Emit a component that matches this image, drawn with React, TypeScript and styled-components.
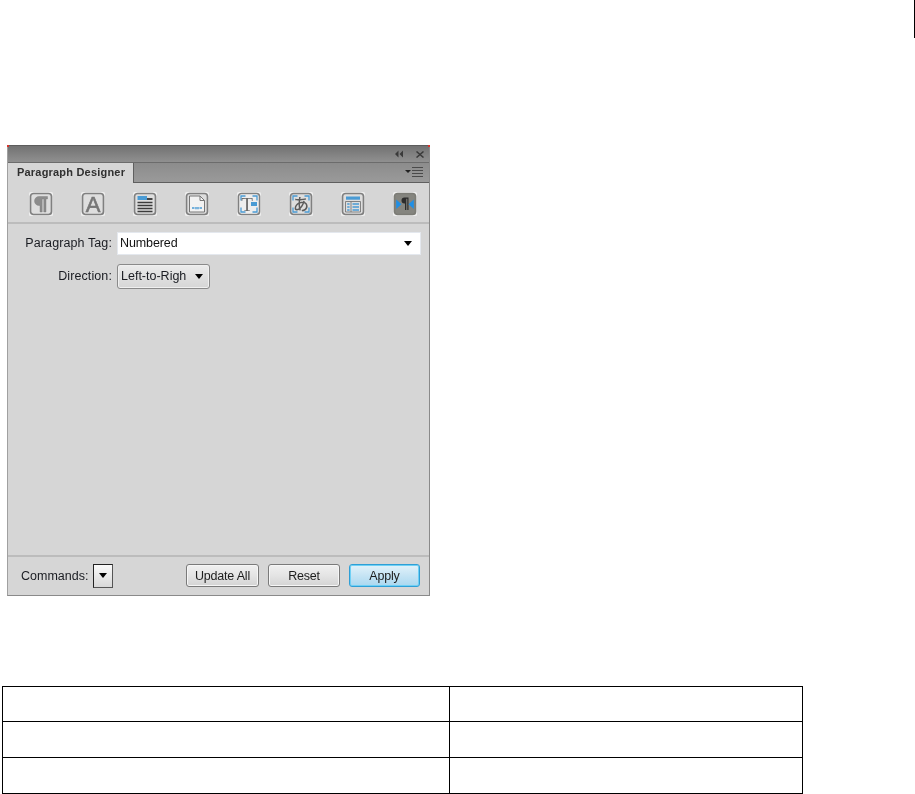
import React from "react";
import styled, { createGlobalStyle, css } from "styled-components";

const Global = createGlobalStyle`
  html, body { margin: 0; padding: 0; background: #fff; }
`;

const Page = styled.div`
  width: 915px;
  height: 794px;
  overflow: hidden;
  display: flex;
  flex-direction: column;
  background: #fff;
  font-family: "Liberation Sans", Arial, sans-serif;
`;

const PageRule = styled.div`
  width: 1px;
  height: 38px;
  margin-left: 914px;
  background: #000;
  flex: none;
`;

const Panel = styled.section`
  position: relative;
  flex: none;
  box-sizing: border-box;
  width: 423px;
  height: 451px;
  margin: 107px 0 0 7px;
  display: flex;
  flex-direction: column;
  background: #d6d6d6;
  border-top: 1px solid #5c5c5c;
  border-right: 1px solid #8a8a8a;
  border-bottom: 1px solid #8a8a8a;
  border-left: 1px solid #a0a0a0;
  filter: blur(0.45px);
  color: #1a1c22;
  font-size: 12px;
`;

const Corner = styled.i<{ $side: "left" | "right" }>`
  position: absolute;
  top: -1px;
  ${(p) => p.$side}: -1px;
  width: 2px;
  height: 2px;
  background: #d8342c;
`;

const TitleBar = styled.div`
  height: 16px;
  flex: none;
  display: flex;
  align-items: center;
  justify-content: flex-end;
  gap: 12px;
  padding-right: 5px;
  background: linear-gradient(#727272, #909090);
  border-bottom: 1px solid #6c6c6c;
`;

const TabStrip = styled.div`
  height: 19px;
  flex: none;
  display: flex;
  justify-content: space-between;
  background: linear-gradient(#8c8c8c, #9a9a9a);
  border-bottom: 1px solid #5f5f5f;
`;

const Tab = styled.div`
  box-sizing: border-box;
  width: 126px;
  height: 20px;
  padding: 3px 0 0 9px;
  background: #d6d6d6;
  border-right: 1px solid #5f5f5f;
  font-size: 11px;
  font-weight: bold;
  letter-spacing: 0.2px;
  color: #303030;
  white-space: nowrap;
`;

const MenuIcon = styled.svg`
  width: 20px;
  height: 12px;
  margin: 3px 5px 0 0;
`;

const IconBar = styled.div`
  height: 41px;
  flex: none;
  box-sizing: border-box;
  display: flex;
  justify-content: space-between;
  align-items: center;
  padding: 3px 12px 0 21px;
  border-bottom: 2px solid #bcbcbc;
`;

const IconTile = styled.svg`
  width: 24px;
  height: 24px;
  flex: none;
  overflow: visible;
`;

const Form = styled.div`
  flex: 1;
  display: flex;
  flex-direction: column;
  gap: 9px;
  padding: 8px 8px 0 0;
`;

const FieldRow = styled.div`
  display: flex;
  align-items: center;
  gap: 5px;
`;

const FieldLabel = styled.span`
  width: 104px;
  flex: none;
  text-align: right;
  font-size: 12.5px;
  letter-spacing: 0.1px;
  white-space: nowrap;
  padding-bottom: 1px;
`;

const TagInput = styled.div`
  flex: 1;
  box-sizing: border-box;
  height: 23px;
  padding: 0 8px 1px 2px;
  display: flex;
  align-items: center;
  justify-content: space-between;
  background: #fff;
  border: 1px solid #e4e8ee;
  font-size: 12.5px;
  letter-spacing: -0.1px;
  color: #111;
`;

const Caret = styled.span`
  width: 0;
  height: 0;
  flex: none;
  border-left: 4.5px solid transparent;
  border-right: 4.5px solid transparent;
  border-top: 5px solid #000;
`;

const DirectionSelect = styled.div`
  box-sizing: border-box;
  width: 93px;
  height: 25px;
  padding: 0 6px 1px 3px;
  display: flex;
  align-items: center;
  justify-content: space-between;
  border: 1px solid #8a8a8a;
  border-radius: 3px;
  background: linear-gradient(#ececec, #e0e0e0 50%, #d6d6d6);
  box-shadow: inset 0 0 0 1px #f0f0f0;
  font-size: 12.5px;
  letter-spacing: 0;
  white-space: nowrap;
`;

const Footer = styled.div`
  height: 40px;
  flex: none;
  box-sizing: border-box;
  display: flex;
  align-items: center;
  padding: 0 9px 1px 13px;
  border-top: 2px solid #bcbcbc;
`;

const CommandsLabel = styled.span`
  font-size: 12.5px;
  width: 72px;
  flex: none;
  white-space: nowrap;
`;

const CommandsButton = styled.div`
  box-sizing: border-box;
  width: 20px;
  height: 24px;
  margin-right: auto;
  display: flex;
  align-items: center;
  justify-content: center;
  border: 1px solid #222;
  border-right-color: #555;
  border-bottom-color: #555;
  background: linear-gradient(#fafafa, #d8d8d8);
`;

const ActionButton = styled.div<{ $primary?: boolean; $width: number }>`
  box-sizing: border-box;
  width: ${(p) => p.$width}px;
  height: 23px;
  margin-left: 9px;
  display: flex;
  align-items: center;
  justify-content: center;
  border: 1px solid #7a7a7a;
  border-radius: 3px;
  font-size: 12.5px;
  letter-spacing: -0.2px;
  color: #1c1c1c;
  background: linear-gradient(#f0f0f0, #e4e4e4 50%, #d4d4d4);
  box-shadow: inset 0 0 0 1px #f6f6f6;
  ${(p) =>
    p.$primary &&
    css`
      border-color: #2f9fd6;
      background: linear-gradient(#e2f2fa, #c6e4f4 50%, #aad8f0);
      box-shadow: inset 0 0 0 1px #6fd0f5;
    `}
`;

const Grid = styled.table`
  flex: none;
  margin: 90px 0 0 2px;
  width: 801px;
  height: 108px;
  border-collapse: collapse;
  table-layout: fixed;
`;

const Cell = styled.td<{ $wide?: boolean }>`
  border: 1px solid #000;
  padding: 0;
  ${(p) => p.$wide && "width: 446px;"}
`;

const Row = styled.tr<{ $h: number }>`
  height: ${(p) => p.$h}px;
`;

const FONT = '"Liberation Sans", Arial, sans-serif';
const BLUE = "#4a9bd4";

const Frame: React.FC<{ children?: React.ReactNode; active?: boolean }> = ({ children, active }) => (
  <IconTile viewBox="0 0 24 24">
    <rect x="0" y="0" width="24" height="24" rx="1.5" fill="#eeeeee" />
    <rect
      x="1.5"
      y="1.5"
      width="21"
      height="21"
      rx="3"
      fill={active ? "#85857f" : "#dedede"}
      stroke={active ? "#7c7c76" : "#808080"}
      strokeWidth="1.7"
    />
    {children}
  </IconTile>
);

const Brackets = () => (
  <path
    d="M4 8.5V4h4.5M15.5 4H20v4.5M4 15.5V20h4.5M15.5 20H20v-4.5"
    fill="none"
    stroke={BLUE}
    strokeWidth="1.3"
  />
);

const Icons = [
  <Frame key="p">
    <path d="M18.5 4.5H10a4.5 4.5 0 0 0 0 9h1V20h2.2V7h1.6v13H17V7h1.5z" fill="#8c8c8c" stroke="#7a7a7a" strokeWidth="0.4" />
  </Frame>,
  <Frame key="a">
    <text x="12" y="20" textAnchor="middle" fontFamily={FONT} fontSize="22" stroke="#777" strokeWidth="0.6" fill="#777">A</text>
  </Frame>,
  <Frame key="l">
    <rect x="4.5" y="4" width="9.5" height="4" fill={BLUE} />
    <rect x="14" y="6" width="5.5" height="2" fill="#444" />
    <path d="M4.5 10.5h15M4.5 13.5h15M4.5 16.5h15M4.5 19.5h15" stroke="#3c3c3c" strokeWidth="1.7" />
  </Frame>,
  <Frame key="d">
    <path d="M4.5 4h10.5l4.5 4.5V20H4.5z" fill="#f2f2f2" stroke="#777" strokeWidth="1" />
    <path d="M15 4v4.5h4.5" fill="none" stroke="#777" strokeWidth="1" />
    <path d="M7 16h2.5M11 15v2.2M13 15v2.2M14.5 16H17" stroke={BLUE} strokeWidth="1.4" />
  </Frame>,
  <Frame key="t">
    <rect x="2.5" y="2.5" width="19" height="19" rx="2" fill="#eeeeee" />
    <Brackets />
    <text x="10" y="18.5" textAnchor="middle" fontFamily="Liberation Serif, serif" fontSize="19" fill="#6a6a6a">T</text>
    <rect x="14" y="10" width="6" height="4" fill={BLUE} />
  </Frame>,
  <Frame key="j">
    <Brackets />
    <text x="12" y="18" textAnchor="middle" fontFamily="Noto Sans CJK JP, sans-serif" fontSize="16" fontWeight="500" fill="#5c5c5c">あ</text>
  </Frame>,
  <Frame key="t2">
    <rect x="5" y="4.5" width="14" height="3.2" fill={BLUE} />
    <path d="M4.5 9.5h15M4.5 20h15M4.5 9.5V20M19.5 9.5V20M10 9.5V20" stroke="#777" strokeWidth="0.9" fill="none" />
    <path d="M11.5 12h6.5M11.5 15h6.5M11.5 18h6.5M6.2 12h2.4M6.2 15h2.4M6.2 18h2.4" stroke={BLUE} strokeWidth="1.3" />
  </Frame>,
  <Frame key="rtl" active>
    <path d="M15.5 5.5H11.5a3 3 0 0 0 0 6H12V18h1.3V6.7h1V18h1.2z" fill="#2c2c2c" />
    <path d="M3.2 7.5v9.5L8.5 12.2zM20.8 7.5v9.5l-5.3-4.8z" fill="#1f8fe6" />
  </Frame>,
];

export default function App() {
  return (
    <Page>
      <Global />
      <PageRule />
      <Panel>
        <Corner $side="left" />
        <Corner $side="right" />
        <TitleBar>
          <svg width="10" height="8" viewBox="0 0 10 8">
            <path d="M4.5 0.5v7L1 4zM9 0.5v7L5.5 4z" fill="#3a3a3a" />
          </svg>
          <svg width="8" height="7" viewBox="0 0 8 7">
            <path d="M0.5 0.5l7 6M7.5 0.5l-7 6" stroke="#3a3a3a" strokeWidth="1.5" />
          </svg>
        </TitleBar>
        <TabStrip>
          <Tab>Paragraph Designer</Tab>
          <MenuIcon viewBox="0 0 20 12">
            <path d="M1 4h6l-3 3z" fill="#222" />
            <path d="M8 1.5h11M8 4.5h11M8 7.5h11M8 10.5h11" stroke="#4a4a4a" strokeWidth="1" />
          </MenuIcon>
        </TabStrip>
        <IconBar>{Icons}</IconBar>
        <Form>
          <FieldRow>
            <FieldLabel>Paragraph Tag:</FieldLabel>
            <TagInput>
              Numbered
              <Caret />
            </TagInput>
          </FieldRow>
          <FieldRow>
            <FieldLabel>Direction:</FieldLabel>
            <DirectionSelect>
              Left-to-Righ
              <Caret />
            </DirectionSelect>
          </FieldRow>
        </Form>
        <Footer>
          <CommandsLabel>Commands:</CommandsLabel>
          <CommandsButton>
            <Caret />
          </CommandsButton>
          <ActionButton $width={73}>Update All</ActionButton>
          <ActionButton $width={72}>Reset</ActionButton>
          <ActionButton $width={71} $primary>Apply</ActionButton>
        </Footer>
      </Panel>
      <Grid>
        <tbody>
          <Row $h={35}>
            <Cell $wide />
            <Cell />
          </Row>
          <Row $h={36}>
            <Cell $wide />
            <Cell />
          </Row>
          <Row $h={36}>
            <Cell $wide />
            <Cell />
          </Row>
        </tbody>
      </Grid>
    </Page>
  );
}
